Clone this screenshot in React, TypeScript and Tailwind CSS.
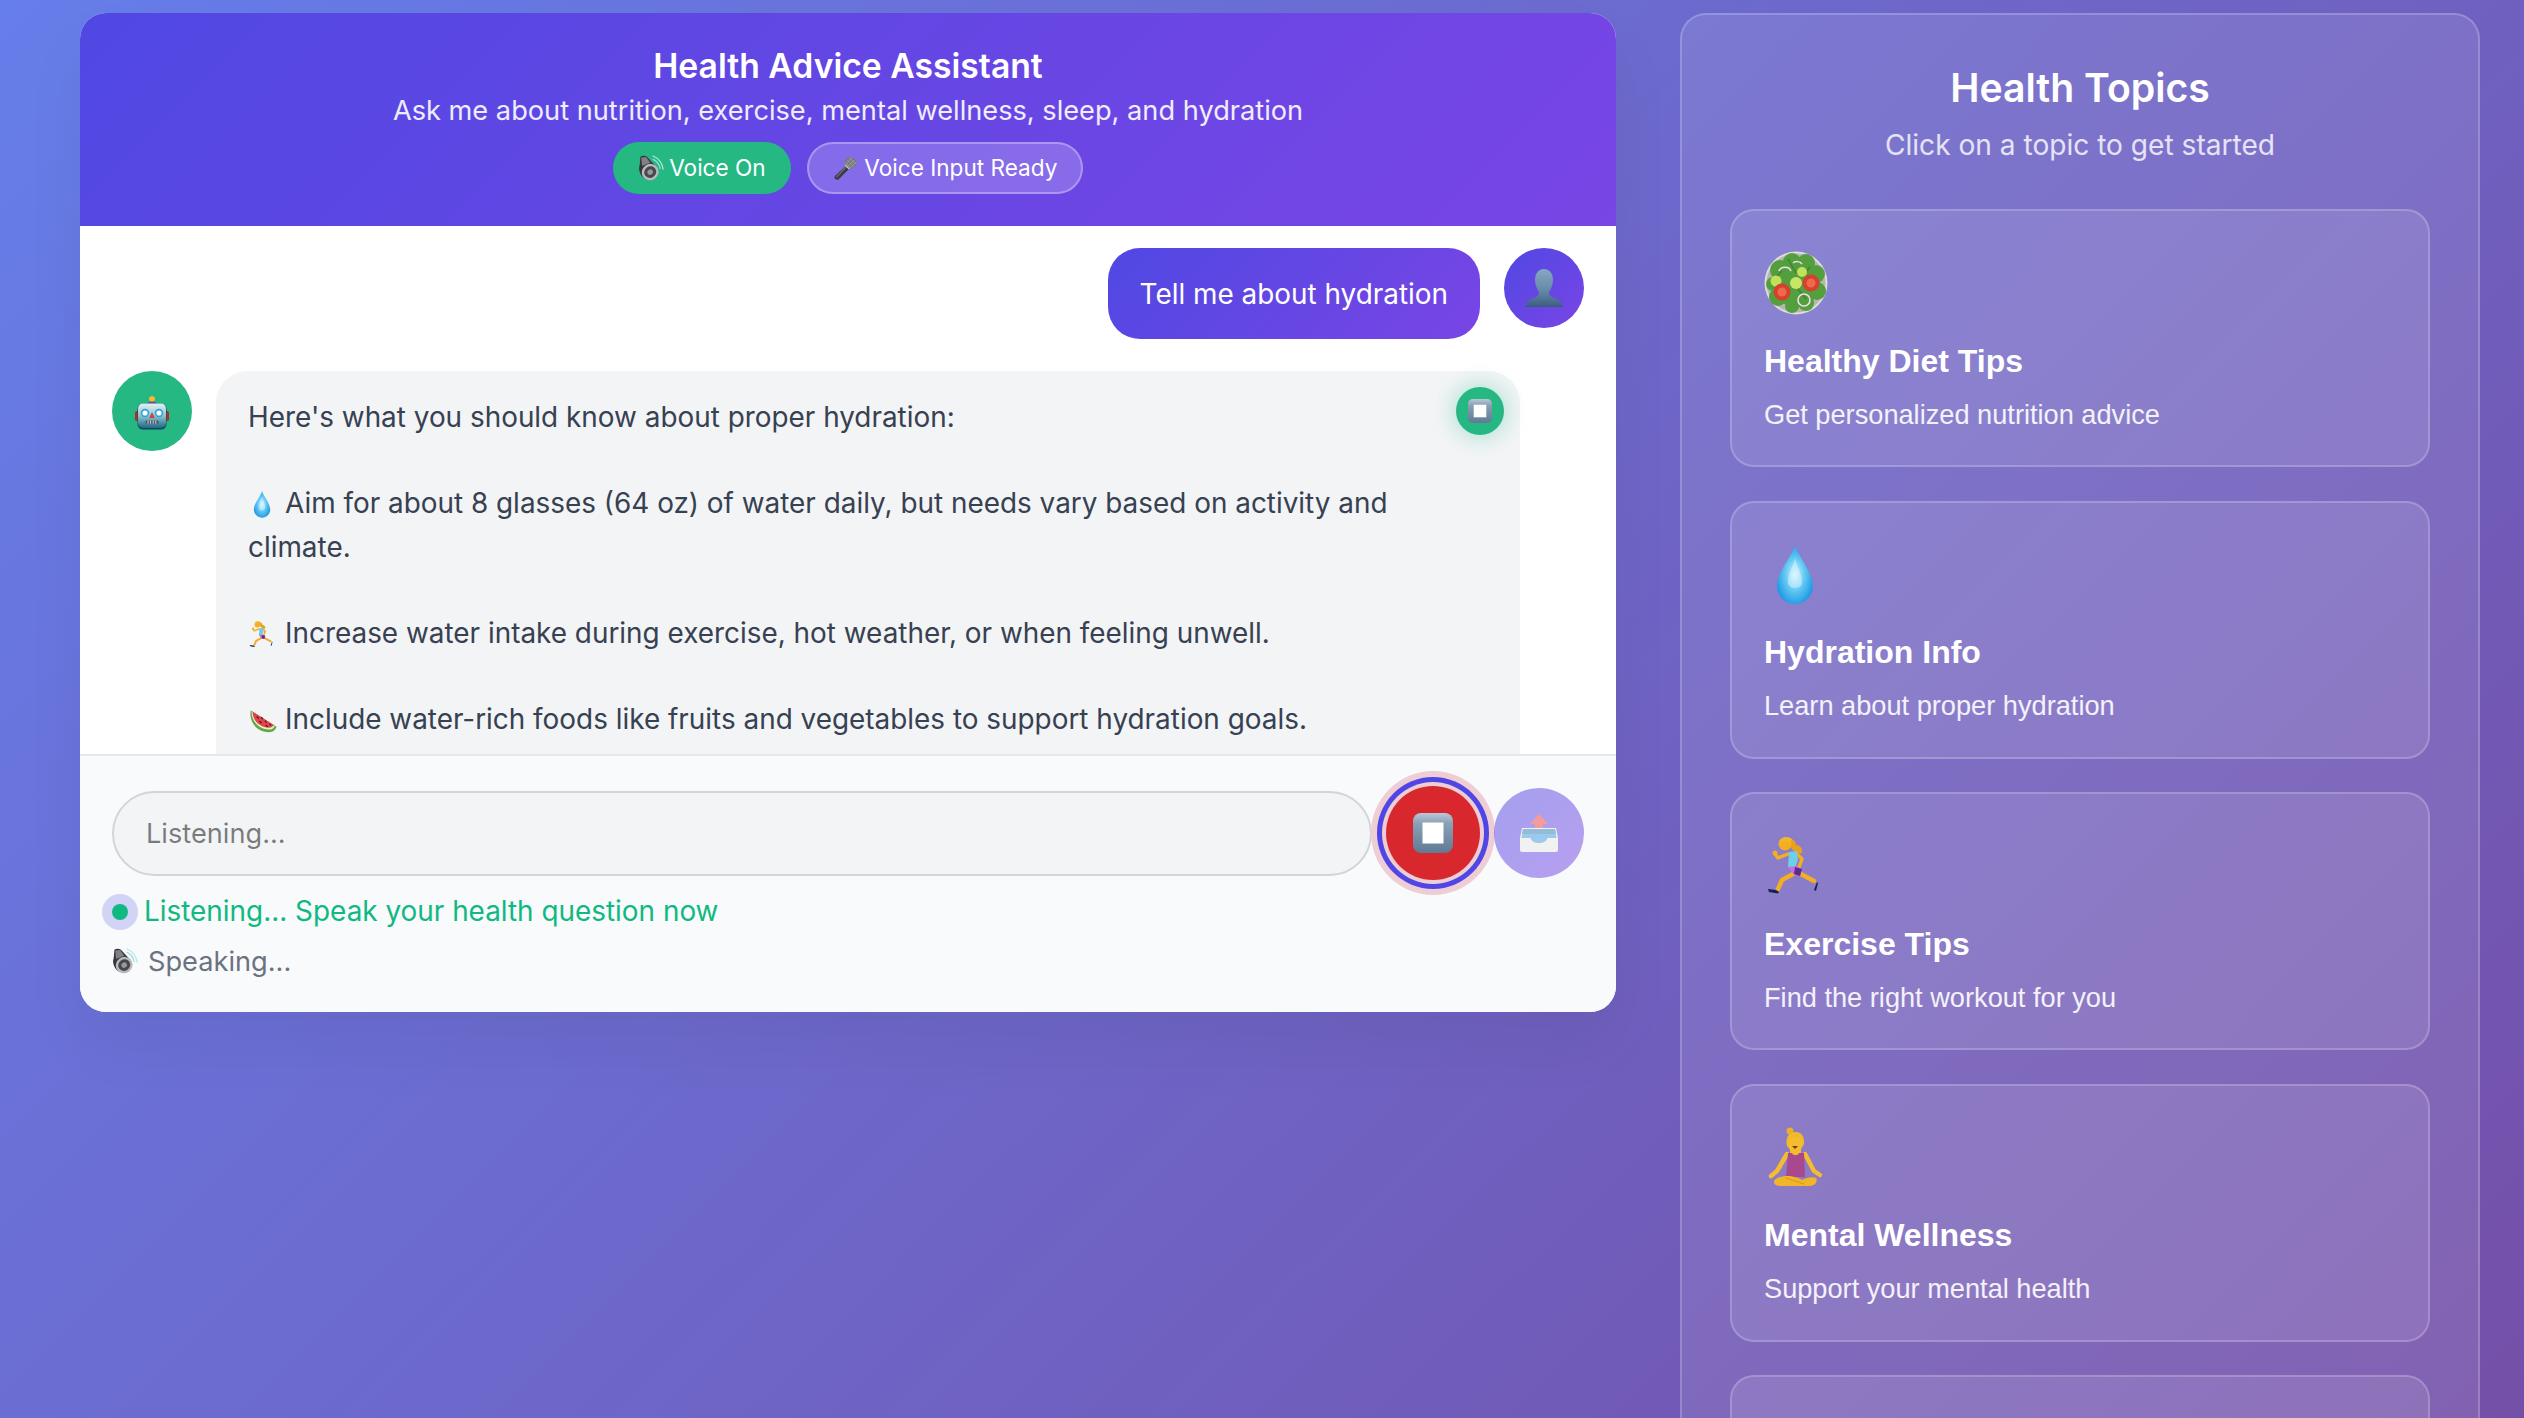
// App.tsx

type IconProps = { className?: string };

function Speaker({ className }: IconProps) {
  return (
    <svg viewBox="0 0 64 64" className={className}>
      <path d="M36 2c14 6 24 18 26 34" fill="none" stroke="#b5e8e4" strokeWidth="3" />
      <path d="M36 10c10 4 17 13 19 24" fill="none" stroke="#9adcdc" strokeWidth="3" />
      <path d="M6 4c4-3 12-3 16 0l24 26-6 26C30 64 12 60 6 46 2 38 2 30 4 26z" fill="#35353a" />
      <path d="M8 6l12-1 10 14-20 8z" fill="#808186" />
      <ellipse cx="30" cy="42" rx="21" ry="20" transform="rotate(-35 30 42)" fill="#b8b9be" />
      <ellipse cx="30" cy="42" rx="15" ry="14" transform="rotate(-35 30 42)" fill="#47474c" />
      <ellipse cx="30" cy="42" rx="7" ry="6.500" transform="rotate(-35 30 42)" fill="#96979b" />
    </svg>
  );
}

function Mic({ className }: IconProps) {
  return (
    <svg viewBox="0 0 64 64" className={className}>
      <path d="M34 24l8 8L14 60c-3 2-6 1-8-1s-3-5-1-8z" fill="#3a3a3e" />
      <path d="M31 27l3 3L10 56l-3-2z" fill="#66676b" />
      <circle cx="45" cy="18" r="15" fill="#77787d" />
      <path d="M36 10l18 18M42 5l17 17M32 17l15 15M37 28l18-18M32 21L49 4M43 32l16-17" stroke="#a9aaae" strokeWidth="1.600" />
      <path d="M31 23l10 10" stroke="#c8c8cb" strokeWidth="3" />
    </svg>
  );
}

function UserBust({ className }: IconProps) {
  return (
    <svg viewBox="0 0 38 38" className={className}>
      <defs>
        <linearGradient id="bust" x1="0" y1="0" x2="0" y2="1">
          <stop offset="0" stopColor="#86a7c1" />
          <stop offset="0.6" stopColor="#6288a6" />
          <stop offset="1" stopColor="#3b5c80" />
        </linearGradient>
      </defs>
      <path d="M19 0c6 0 9 5 9 11 0 5-2 9-4 12 0 3 1 4 5 6 6 2 8 5 9 9H0c1-4 3-7 9-9 4-2 5-3 5-6-2-3-4-7-4-12C10 5 13 0 19 0z" fill="url(#bust)" />
    </svg>
  );
}

function Robot({ className }: IconProps) {
  return (
    <svg viewBox="0 0 34 34" className={className}>
      <defs>
        <linearGradient id="robotHead" x1="0" y1="0" x2="0" y2="1">
          <stop offset="0" stopColor="#e4f1f3" />
          <stop offset="0.5" stopColor="#8fc2cc" />
          <stop offset="1" stopColor="#1f6a86" />
        </linearGradient>
      </defs>
      <circle cx="17" cy="3" r="3" fill="#f7b733" />
      <path d="M13 7c0-2 8-2 8 0v2h-8z" fill="#6a4c9c" />
      <rect x="0" y="15" width="4" height="10" rx="1.500" fill="#a83232" />
      <rect x="30" y="15" width="4" height="10" rx="1.500" fill="#a83232" />
      <rect x="2.500" y="7.500" width="29" height="26" rx="5.500" fill="#12465f" />
      <rect x="3" y="7.500" width="28" height="24.500" rx="5" fill="url(#robotHead)" />
      <circle cx="10" cy="17" r="4.200" fill="#2ba3dc" />
      <circle cx="10" cy="17" r="2.600" fill="#ffffff" />
      <circle cx="24" cy="17" r="4.200" fill="#2ba3dc" />
      <circle cx="24" cy="17" r="2.600" fill="#ffffff" />
      <path d="M17 16l2.800 6h-5.600z" fill="#c8444a" />
      <rect x="10.500" y="24.500" width="13" height="3.200" rx="1" fill="#4a5560" />
      <path d="M13 24.500v3.200M15.600 24.500v3.200M18.200 24.500v3.200M20.800 24.500v3.200" stroke="#d5dade" strokeWidth="1" />
    </svg>
  );
}

function StopSquare({ className }: IconProps) {
  return (
    <svg viewBox="0 0 40 40" className={className}>
      <defs>
        <linearGradient id="stopSquare" x1="0" y1="0" x2="0" y2="1">
          <stop offset="0" stopColor="#bcc9d6" />
          <stop offset="0.25" stopColor="#8aa1b6" />
          <stop offset="1" stopColor="#5f7a94" />
        </linearGradient>
      </defs>
      <rect width="40" height="40" rx="8" fill="url(#stopSquare)" />
      <rect x="9.500" y="9.500" width="21" height="21" fill="#ffffff" />
    </svg>
  );
}

function Outbox({ className }: IconProps) {
  return (
    <svg viewBox="0 0 38 38" className={className}>
      <path d="M19 0l9 10h-5v7h-8v-7h-5z" fill="#f0403f" />
      <path d="M2 14h34l2 10v12a2 2 0 0 1-2 2H2a2 2 0 0 1-2-2V24z" fill="#e9e9e6" />
      <path d="M3 15h32l1.500 9h-9c-1 3-4 5-8.500 5s-7.500-2-8.500-5h-9z" fill="#3d9be0" />
      <path d="M3 15h32l1 5H2z" fill="#2f7fb8" />
    </svg>
  );
}

function Droplet({ className }: IconProps) {
  return (
    <svg viewBox="0 0 64 64" className={className}>
      <defs>
        <radialGradient id="drop" cx="0.5" cy="0.5" r="0.6">
          <stop offset="0" stopColor="#d8f6ff" />
          <stop offset="0.45" stopColor="#63c8f4" />
          <stop offset="1" stopColor="#0f8fe0" />
        </radialGradient>
      </defs>
      <path d="M31 2c2 10 18 27 18 41 0 10-8 18-18 18s-18-8-18-18C13 29 29 12 31 2z" fill="url(#drop)" />
      <path d="M31 14c1 8 7 16 7 25 0 4-3 6-7 6s-7-2-7-6c0-9 6-17 7-25z" fill="#e2f8ff" opacity="0.45" />
    </svg>
  );
}

function Runner({ className }: IconProps) {
  return (
    <svg viewBox="0 0 64 64" className={className} fill="none" strokeLinecap="round" strokeLinejoin="round">
      <path d="M19 6c6-4 13 0 13 5 4 0 7 3 6 8-4 1-8-1-10-4z" fill="#e9a11d" />
      <path d="M29 40l-11 6-4 9" stroke="#f3ae23" strokeWidth="4.500" />
      <path d="M35 39l15 8" stroke="#f3ae23" strokeWidth="4.500" />
      <path d="M24 20l-10 4-3-4" stroke="#f3ae23" strokeWidth="3.500" />
      <circle cx="11" cy="19" r="2.500" fill="#f3ae23" />
      <path d="M32 19l6 6-3 8" stroke="#f3ae23" strokeWidth="3.500" />
      <path d="M25 18l8-1 1 9-3 8-7-1z" fill="#6dd0ea" />
      <path d="M24 33l8-1 6 3-2 7-7-2z" fill="#c86ee0" />
      <path d="M31 33l7 2-2 7-6-2z" fill="#5d2a90" />
      <circle cx="21" cy="10" r="6.500" fill="#f3ae23" />
      <path d="M15 9c0-6 9-8 13-4l-2 4c-4-2-7-2-11 0z" fill="#f0b62d" />
      <path d="M4 55l8 1 3 2-1 1.500L5 58z" fill="#14224f" />
      <path d="M53 48l1 1-2 8-2-1z" fill="#14224f" />
    </svg>
  );
}

function Meditator({ className }: IconProps) {
  return (
    <svg viewBox="0 0 64 64" className={className} fill="none" strokeLinecap="round" strokeLinejoin="round">
      <circle cx="26" cy="5" r="3.500" fill="#e8b126" />
      <path d="M23 20c-2-8 2-15 9-14 6 0 9 6 8 12l-3 5H26z" fill="#efb92d" />
      <path d="M23 28l-10 17-6 5" stroke="#f5bd2e" strokeWidth="4.500" />
      <path d="M41 28l9 17 6 4" stroke="#f5bd2e" strokeWidth="4.500" />
      <circle cx="31" cy="18" r="7.500" fill="#f5bd2e" />
      <path d="M28 20h6l-3 3z" fill="#6a3d12" />
      <rect x="26" y="23" width="11" height="6" fill="#f5bd2e" />
      <path d="M24 27h4c1 3 6 3 7 0h5l1 24H22z" fill="#a9488f" />
      <path d="M10 56c0-4 8-6 14-6 4 0 12 2 14 4 3-2 10-4 14-2 2 2 0 8-6 8H18c-5 0-8-1-8-4z" fill="#f0b528" />
      <path d="M22 52l18 6" stroke="#d99a1c" strokeWidth="1.200" />
    </svg>
  );
}

function Watermelon({ className }: IconProps) {
  return (
    <svg viewBox="0 0 64 64" className={className}>
      <path d="M6 10C2 30 14 56 46 58c10 0 15-6 17-12z" fill="#5fa84a" />
      <path d="M8 12C7 28 18 50 46 52c7 0 11-3 13-8z" fill="#e8f0c8" />
      <path d="M10 12c0 16 11 34 36 36 6 0 9-3 11-6z" fill="#e2434b" />
      <path d="M20 24l3 3M30 25l2 3M26 34l3 3M38 33l2 3M40 43l3 2M48 40l2 2" stroke="#3a1414" strokeWidth="2.400" strokeLinecap="round" />
    </svg>
  );
}

function Salad({ className }: IconProps) {
  const leaves: [number, number, number][] = [
    [32, 32, 24], [16, 19, 10], [28, 11, 9], [42, 12, 9], [52, 23, 9], [53, 40, 9],
    [42, 52, 8], [28, 55, 7], [14, 46, 9], [9, 33, 7],
  ];
  return (
    <svg viewBox="0 0 64 64" className={className}>
      <circle cx="32" cy="32" r="31.500" fill="#dcdcd8" />
      <circle cx="32" cy="32" r="29.500" fill="#b5b7b0" />
      {leaves.map(([x, y, r]) => (
        <circle key={`${x}-${y}`} cx={x} cy={y} r={r} fill="#539f3e" />
      ))}
      <path d="M8 30l10-10M24 8l8 14M46 16l-8 10M54 34L40 34M42 48L34 38M18 50l8-12" stroke="#3f842f" strokeWidth="1.500" />
      <circle cx="12" cy="30" r="5.500" fill="#c3e05a" />
      <circle cx="32" cy="32" r="6" fill="#c9e566" />
      <circle cx="38" cy="21" r="5" fill="#c3e05a" />
      <circle cx="18" cy="41" r="8.500" fill="#d6402c" />
      <circle cx="18" cy="41" r="4.500" fill="#ef6a4c" />
      <circle cx="47" cy="32" r="8.500" fill="#d6402c" />
      <circle cx="47" cy="32" r="4.500" fill="#ef6a4c" />
      <circle cx="40" cy="49" r="6" fill="none" stroke="#efdfe8" strokeWidth="1.600" />
      <path d="M15 20c2-5 10-5 12 0" fill="none" stroke="#efdfe8" strokeWidth="1.600" />
      <path d="M29 12c2-2 7-2 9 1" fill="none" stroke="#efdfe8" strokeWidth="1.500" />
    </svg>
  );
}

const inlineIcon = 'inline-block w-[29px] h-[29px] align-[-6px] mr-[8px]';

const topics = [
  { icon: <Salad className="w-16 h-16" />, title: 'Healthy Diet Tips', text: 'Get personalized nutrition advice' },
  { icon: <Droplet className="w-16 h-16" />, title: 'Hydration Info', text: 'Learn about proper hydration' },
  { icon: <Runner className="w-16 h-16" />, title: 'Exercise Tips', text: 'Find the right workout for you' },
  { icon: <Meditator className="w-16 h-16" />, title: 'Mental Wellness', text: 'Support your mental health' },
];

function TopicCard({ icon, title, text }: { icon: React.ReactNode; title: string; text: string }) {
  return (
    <button className="flex flex-col items-start justify-start w-full h-[258px] text-left font-['Liberation_Sans',sans-serif] pt-[40px] px-[32px] border-2 border-white/20 rounded-[24px] bg-white/10 text-white">
      {icon}
      <div className="mt-[21.5px] text-[32px] font-bold leading-[48px]">{title}</div>
      <div className="mt-[8px] text-[27.2px] leading-[43px] text-white/90">{text}</div>
    </button>
  );
}

export default function App() {
  return (
    <div className="h-[1418px] overflow-hidden">
      <div className="min-h-[1800px] bg-[linear-gradient(135deg,#667eea_0%,#764ba2_100%)] font-['Inter',sans-serif] pl-[80px] pt-[13px] flex items-start gap-[64px]">
        <div className="w-[1536px] shrink-0 bg-white rounded-[26px] overflow-hidden shadow-[0_32px_64px_rgba(0,0,0,0.05)]">
          <div className="bg-[linear-gradient(135deg,#5048e3_0%,#7945e5_100%)] text-white text-center pt-[31px] pb-[32px]">
            <h1 className="text-[33.7px] font-semibold leading-[44px]">Health Advice Assistant</h1>
            <p className="text-[27.2px] leading-[43.5px] pt-[1px] text-white/90">Ask me about nutrition, exercise, mental wellness, sleep, and hydration</p>
            <div className="mt-[9.5px] flex justify-center gap-[16px]">
              <span className="h-[52px] px-[25.6px] rounded-full bg-[#25b883] flex items-center text-[22.6px]">
                <Speaker className="w-[26px] h-[26px] mr-[5px]" />
                Voice On
              </span>
              <span className="h-[52px] px-[24px] rounded-full bg-white/20 border-2 border-white/30 flex items-center text-[22.6px]">
                <Mic className="w-[25px] h-[25px] mr-[6px]" />
                Voice Input Ready
              </span>
            </div>
          </div>

          <div className="h-[528px] overflow-hidden px-[32px] pt-[22px] flex flex-col gap-[32px]">
            <div className="flex justify-end gap-[24px] shrink-0">
              <div className="h-[91px] pt-[2px] px-[32px] rounded-[32px] bg-[linear-gradient(135deg,#5048e3_0%,#7945e5_100%)] text-white text-[27.9px] flex items-center">
                Tell me about hydration
              </div>
              <div className="w-[80px] h-[80px] rounded-full bg-[linear-gradient(135deg,#5048e3_0%,#7945e5_100%)] flex items-center justify-center">
                <UserBust className="w-[38px] h-[38px]" />
              </div>
            </div>

            <div className="flex gap-[24px] shrink-0">
              <div className="w-[80px] h-[80px] rounded-full bg-[#25b883] flex items-center justify-center shrink-0">
                <Robot className="w-[34px] h-[34px] mt-[4px]" />
              </div>
              <div className="relative w-[1304px] min-h-[560px] rounded-[32px] bg-[#f3f4f6] px-[32px] pt-[25px] text-[27.9px] leading-[43.2px] text-[#374151]">
                <button className="absolute right-[16px] top-[16px] w-[48px] h-[48px] rounded-full bg-[#25b883] shadow-[0_0_24px_rgba(16,185,129,0.4)] flex items-center justify-center">
                  <StopSquare className="w-[24px] h-[24px]" />
                </button>
                <p>Here's what you should know about proper hydration:</p>
                <br />
                <p><Droplet className={inlineIcon} />Aim for about 8 glasses (64 oz) of water daily, but needs vary based on activity and climate.</p>
                <br />
                <p><Runner className={inlineIcon} />Increase water intake during exercise, hot weather, or when feeling unwell.</p>
                <br />
                <p><Watermelon className={inlineIcon} />Include water-rich foods like fruits and vegetables to support hydration goals.</p>
              </div>
            </div>
          </div>

          <div className="border-t-2 border-[#e5e7eb] bg-[#f9fafb] px-[32px] pt-[29px] pb-[29px]">
            <div className="flex items-center gap-[13px]">
              <input
                readOnly
                placeholder="Listening..."
                className="flex-1 h-[85px] rounded-full border-2 border-[#d1d5db] bg-[#f3f4f6] px-[32px] text-[27.2px] outline-none"
              />
              <button className="w-[94px] h-[94px] my-[1px] mx-[1px] rounded-full bg-[#d8282e] shadow-[0_0_0_4px_#efcdd4,0_0_0_9px_#4f46e5,0_0_0_15px_#efcdd4] flex items-center justify-center">
                <StopSquare className="w-[40px] h-[40px]" />
              </button>
              <button className="w-[90px] h-[90px] rounded-full bg-[linear-gradient(135deg,#5048e3_0%,#7945e5_100%)] opacity-50 flex items-center justify-center">
                <Outbox className="w-[38px] h-[38px]" />
              </button>
            </div>
            <div className="mt-[9px] flex items-center gap-[16px] text-[27.9px] leading-[43.5px] text-[#10b981]">
              <span className="w-[16px] h-[16px] rounded-full bg-[#10b981] shadow-[0_0_0_10px_#d3d3f6]" />
              Listening... Speak your health question now
            </div>
            <div className="mt-[6px] flex items-center gap-[10px] text-[27.2px] leading-[43.5px] text-[#6b7280]">
              <Speaker className="w-[26px] h-[26px]" />
              Speaking...
            </div>
          </div>
        </div>

        <div className="w-[800px] shrink-0 border-2 border-white/20 rounded-[26px] bg-white/10 px-[48px] pt-[44px] pb-[48px]">
          <h2 className="text-[39.2px] font-semibold leading-[58px] text-white text-center">Health Topics</h2>
          <p className="mt-[5px] text-[28.1px] leading-[46px] text-white/80 text-center">Click on a topic to get started</p>
          <div className="mt-[41px] flex flex-col gap-[33.5px]">
            {topics.map((t) => (
              <TopicCard key={t.title} icon={t.icon} title={t.title} text={t.text} />
            ))}
            <div className="h-[258px] border-2 border-white/20 rounded-[24px] bg-white/10" />
          </div>
        </div>
      </div>
    </div>
  );
}
